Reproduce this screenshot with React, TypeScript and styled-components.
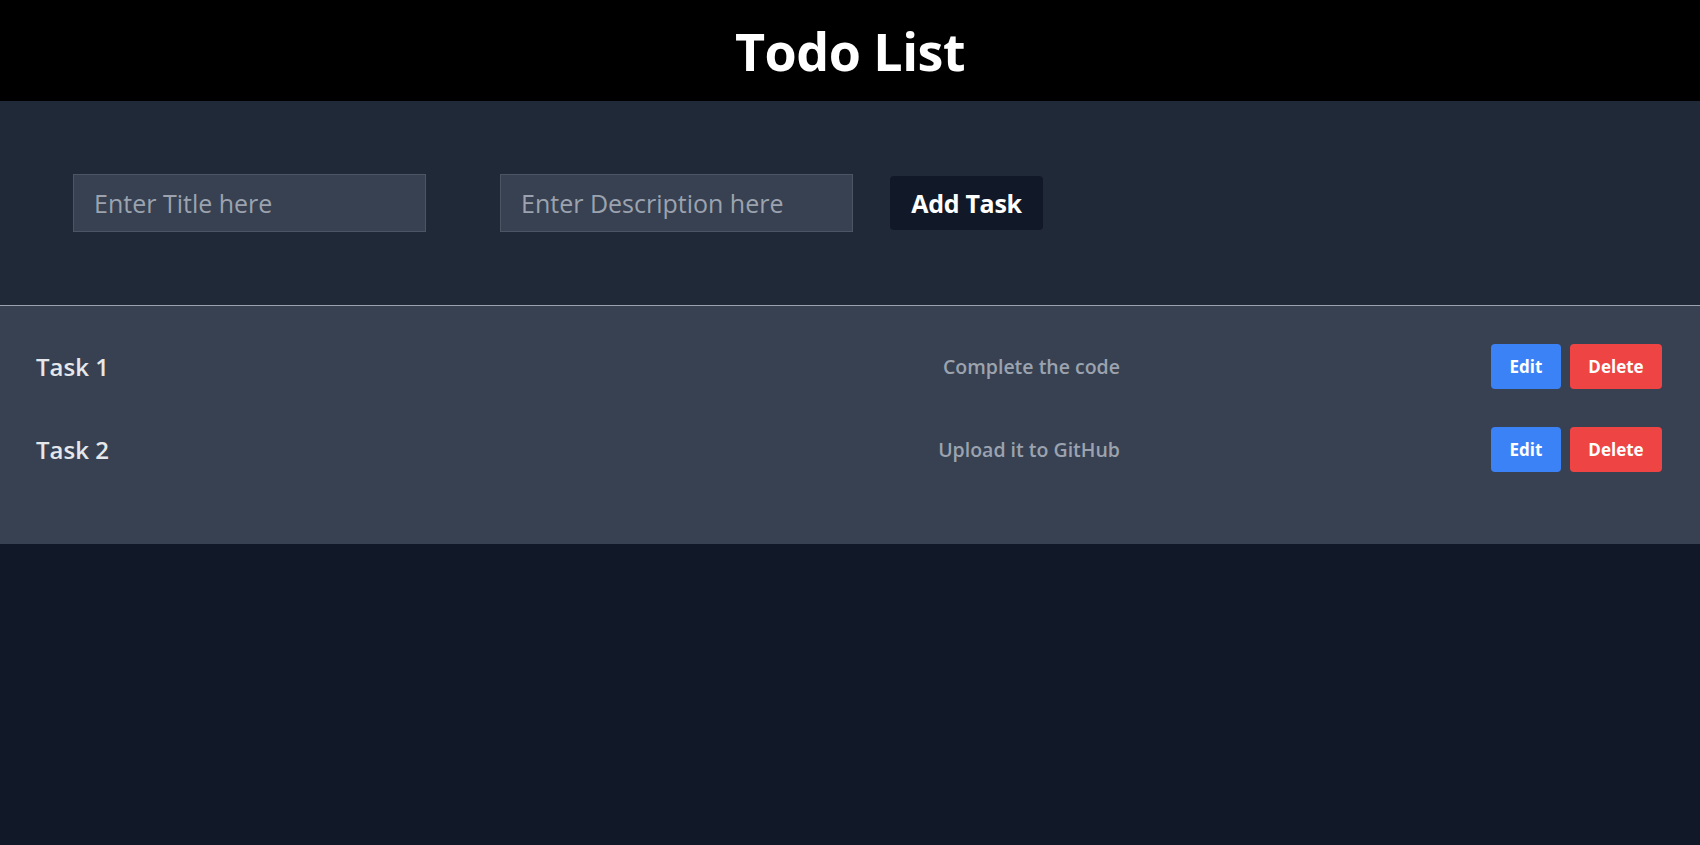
import styled, { createGlobalStyle } from "styled-components";

const GlobalStyle = createGlobalStyle`
  body {
    margin: 0;
    background-color: #111827;
    font-family: "Open Sans", "Noto Sans", sans-serif;
  }
`

const Header = styled.header`
  background-color: #000000;
  height: 101px;
  display: flex;
  align-items: center;
  justify-content: center;
`

const Title = styled.h1`
  margin: 0;
  color: #ffffff;
  font-size: 52px;
  font-weight: 700;
  letter-spacing: -0.5px;
`

const Form = styled.section`
  background-color: #1f2937;
  height: 204px;
  display: flex;
  align-items: center;
  padding-left: 36px;
  border-bottom: 1px solid #9ca3af;
`

const Input = styled.input`
  box-sizing: border-box;
  width: 353px;
  height: 58px;
  margin: 0 37px;
  padding: 0 20px;
  background-color: #374151;
  border: 1px solid #4b5563;
  color: #e5e7eb;
  font-family: inherit;
  font-size: 25px;
  outline: none;

  &::placeholder {
    color: #9ca3af;
  }
`

const AddButton = styled.button`
  box-sizing: border-box;
  width: 153px;
  height: 54px;
  background-color: #111827;
  border: none;
  border-radius: 4px;
  color: #ffffff;
  font-family: inherit;
  font-size: 25px;
  font-weight: 700;
  letter-spacing: -0.3px;
`

const List = styled.section`
  background-color: #374151;
  padding: 19px 38px 53px 36px;
`

const Row = styled.div`
  display: grid;
  grid-template-columns: 1fr 1fr 1fr;
  align-items: center;
  height: 83px;
`

const TaskTitle = styled.span`
  color: #e5e7eb;
  font-size: 24px;
  font-weight: 600;
`

const TaskDesc = styled.span`
  text-align: right;
  color: #9ca3af;
  font-size: 19.5px;
  font-weight: 600;
`

const Actions = styled.div`
  display: flex;
  justify-content: flex-end;
  gap: 9px;
`

const ActionButton = styled.button<{ $color: string; $width: number }>`
  width: ${(p) => p.$width}px;
  height: 45px;
  background-color: ${(p) => p.$color};
  border: none;
  border-radius: 4px;
  color: #ffffff;
  font-family: inherit;
  font-size: 17px;
  font-weight: 700;
`

const tasks = [
  { title: "Task 1", desc: "Complete the code" },
  { title: "Task 2", desc: "Upload it to GitHub" },
]

export default function App() {
  return (
    <>
      <GlobalStyle />
      <Header>
        <Title>Todo List</Title>
      </Header>
      <Form>
        <Input placeholder="Enter Title here" />
        <Input placeholder="Enter Description here" />
        <AddButton>Add Task</AddButton>
      </Form>
      <List>
        {tasks.map((t) => (
          <Row key={t.title}>
            <TaskTitle>{t.title}</TaskTitle>
            <TaskDesc>{t.desc}</TaskDesc>
            <Actions>
              <ActionButton $color="#3b82f6" $width={70}>Edit</ActionButton>
              <ActionButton $color="#ef4444" $width={92}>Delete</ActionButton>
            </Actions>
          </Row>
        ))}
      </List>
    </>
  )
}
